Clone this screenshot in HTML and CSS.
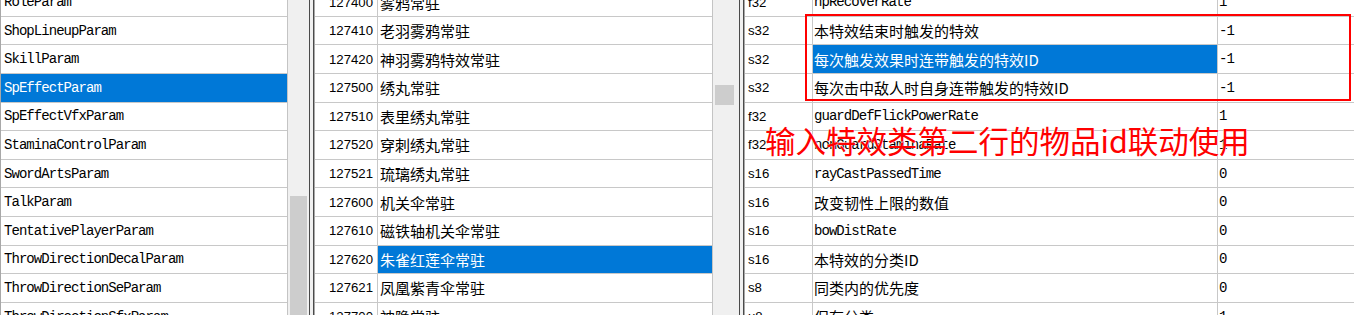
FILE: index.html
```html
<!DOCTYPE html>
<html lang="zh-CN">
<head>
  <meta charset="UTF-8">
  <meta name="viewport" content="width=device-width, initial-scale=1.0">
  <title>Param Editor</title>
  <link rel="stylesheet" href="styles.css">
</head>
<body>
  <div class="app">
    <div class="pane pane-params">
      <div class="list params">
        <div class="row"><div class="cell param">RoleParam</div></div>
        <div class="row"><div class="cell param">ShopLineupParam</div></div>
        <div class="row"><div class="cell param">SkillParam</div></div>
        <div class="row sel"><div class="cell param">SpEffectParam</div></div>
        <div class="row"><div class="cell param">SpEffectVfxParam</div></div>
        <div class="row"><div class="cell param">StaminaControlParam</div></div>
        <div class="row"><div class="cell param">SwordArtsParam</div></div>
        <div class="row"><div class="cell param">TalkParam</div></div>
        <div class="row"><div class="cell param">TentativePlayerParam</div></div>
        <div class="row"><div class="cell param">ThrowDirectionDecalParam</div></div>
        <div class="row"><div class="cell param">ThrowDirectionSeParam</div></div>
        <div class="row"><div class="cell param">ThrowDirectionSfxParam</div></div>
      </div>
      <div class="vscroll vscroll-params"><div class="thumb thumb-params"></div></div>
    </div>

    <div class="splitter"></div>

    <div class="pane pane-rows">
      <div class="list rows">
        <div class="row"><div class="cell id">127400</div><div class="cell name">雾鸦常驻</div></div>
        <div class="row"><div class="cell id">127410</div><div class="cell name">老羽雾鸦常驻</div></div>
        <div class="row"><div class="cell id">127420</div><div class="cell name">神羽雾鸦特效常驻</div></div>
        <div class="row"><div class="cell id">127500</div><div class="cell name">绣丸常驻</div></div>
        <div class="row"><div class="cell id">127510</div><div class="cell name">表里绣丸常驻</div></div>
        <div class="row"><div class="cell id">127520</div><div class="cell name">穿刺绣丸常驻</div></div>
        <div class="row"><div class="cell id">127521</div><div class="cell name">琉璃绣丸常驻</div></div>
        <div class="row"><div class="cell id">127600</div><div class="cell name">机关伞常驻</div></div>
        <div class="row"><div class="cell id">127610</div><div class="cell name">磁铁轴机关伞常驻</div></div>
        <div class="row"><div class="cell id">127620</div><div class="cell name sel">朱雀红莲伞常驻</div></div>
        <div class="row"><div class="cell id">127621</div><div class="cell name">凤凰紫青伞常驻</div></div>
        <div class="row"><div class="cell id">127700</div><div class="cell name">神隐常驻</div></div>
      </div>
      <div class="vscroll vscroll-rows"><div class="thumb thumb-rows"></div></div>
    </div>

    <div class="splitter"></div>

    <div class="pane pane-fields">
      <div class="list fields">
        <div class="row"><div class="cell type">f32</div><div class="cell field mono">hpRecoverRate</div><div class="cell value">1</div></div>
        <div class="row"><div class="cell type">s32</div><div class="cell field">本特效结束时触发的特效</div><div class="cell value">-1</div></div>
        <div class="row"><div class="cell type">s32</div><div class="cell field sel">每次触发效果时连带触发的特效ID</div><div class="cell value">-1</div></div>
        <div class="row"><div class="cell type">s32</div><div class="cell field">每次击中敌人时自身连带触发的特效ID</div><div class="cell value">-1</div></div>
        <div class="row"><div class="cell type">f32</div><div class="cell field mono">guardDefFlickPowerRate</div><div class="cell value">1</div></div>
        <div class="row"><div class="cell type">f32</div><div class="cell field mono">nonGuardStaminaRate</div><div class="cell value">1</div></div>
        <div class="row"><div class="cell type">s16</div><div class="cell field mono">rayCastPassedTime</div><div class="cell value">0</div></div>
        <div class="row"><div class="cell type">s16</div><div class="cell field">改变韧性上限的数值</div><div class="cell value">0</div></div>
        <div class="row"><div class="cell type">s16</div><div class="cell field mono">bowDistRate</div><div class="cell value">0</div></div>
        <div class="row"><div class="cell type">s16</div><div class="cell field">本特效的分类ID</div><div class="cell value">0</div></div>
        <div class="row"><div class="cell type">s8</div><div class="cell field">同类内的优先度</div><div class="cell value">0</div></div>
        <div class="row"><div class="cell type">u8</div><div class="cell field">保存分类</div><div class="cell value">1</div></div>
      </div>
    </div>
  </div>

  <div class="mark-box"></div>
  <div class="mark-note">输入特效类第二行的物品id联动使用</div>
</body>
</html>
```

FILE: styles.css
```css
body {
  margin: 0;
  height: 315px;
  overflow: hidden;
  position: relative;
  background: #f0f0f0;
  color: #000;
  font-family: "Noto Sans CJK SC", "Liberation Sans", sans-serif;
  font-size: 15px;
}
.app {
  display: flex;
  height: 315px;
}
.pane {
  display: flex;
  height: 100%;
}
.pane-params {
  width: 309px;
}
.pane-rows {
  width: 425px;
}
.pane-fields {
  flex: 1;
  min-width: 0;
}
.list {
  background: #fff;
  box-sizing: border-box;
  border-left: 1px solid #a8a8a8;
  border-right: 1px solid #c4c4c4;
  overflow: hidden;
  height: 100%;
}
.params {
  width: 288px;
}
.rows {
  width: 399px;
}
.fields {
  flex: 1;
  border-right: none;
}
.row {
  display: flex;
  height: 28.6px;
  box-sizing: border-box;
  border-bottom: 1px solid #c8c8c8;
}
.row:first-child {
  margin-top: -11.8px;
}
.cell {
  display: flex;
  align-items: center;
  box-sizing: border-box;
  white-space: nowrap;
  overflow: hidden;
}
.row.sel,
.cell.sel {
  background: #0078d7;
  color: #fff;
}
.param,
.mono,
.value {
  font-family: "Liberation Mono", monospace;
  font-size: 14px;
  letter-spacing: -0.95px;
}
.param {
  flex: 1;
  padding-left: 3px;
}
.id {
  width: 63px;
  justify-content: flex-end;
  padding-right: 4px;
  border-right: 1px solid #c8c8c8;
  font-family: "Liberation Sans", sans-serif;
  font-size: 13.2px;
}
.name {
  flex: 1;
  padding-left: 2px;
}
.type {
  width: 68px;
  padding-left: 3px;
  border-right: 1px solid #c8c8c8;
  font-family: "Liberation Sans", sans-serif;
  font-size: 13.2px;
}
.field {
  width: 405px;
  padding-left: 1px;
  border-right: 1px solid #c8c8c8;
}
.value {
  flex: 1;
  padding-left: 1px;
}
.vscroll {
  background: #f0f0f0;
  height: 100%;
}
.vscroll-params {
  width: 21px;
}
.vscroll-rows {
  width: 26px;
}
.thumb {
  background: #cdcdcd;
  margin-left: 2px;
}
.thumb-params {
  width: 17px;
  margin-top: 196px;
  height: 140px;
}
.thumb-rows {
  width: 19px;
  margin-top: 85px;
  height: 20px;
}
.splitter {
  width: 3px;
  height: 100%;
  background: #f0f0f0;
  border-left: 1px solid #4a4a4a;
  border-right: 1px solid #4a4a4a;
}
.mark-box {
  position: absolute;
  left: 805px;
  top: 14px;
  width: 546px;
  height: 87px;
  box-sizing: border-box;
  border: 2px solid #ff0000;
}
.mark-note {
  position: absolute;
  left: 765px;
  top: 124px;
  font-size: 30.5px;
  line-height: 1.1;
  color: #ff0000;
  text-shadow: 0 0 1px #fff, 0 0 1px #fff;
  white-space: nowrap;
}
```
